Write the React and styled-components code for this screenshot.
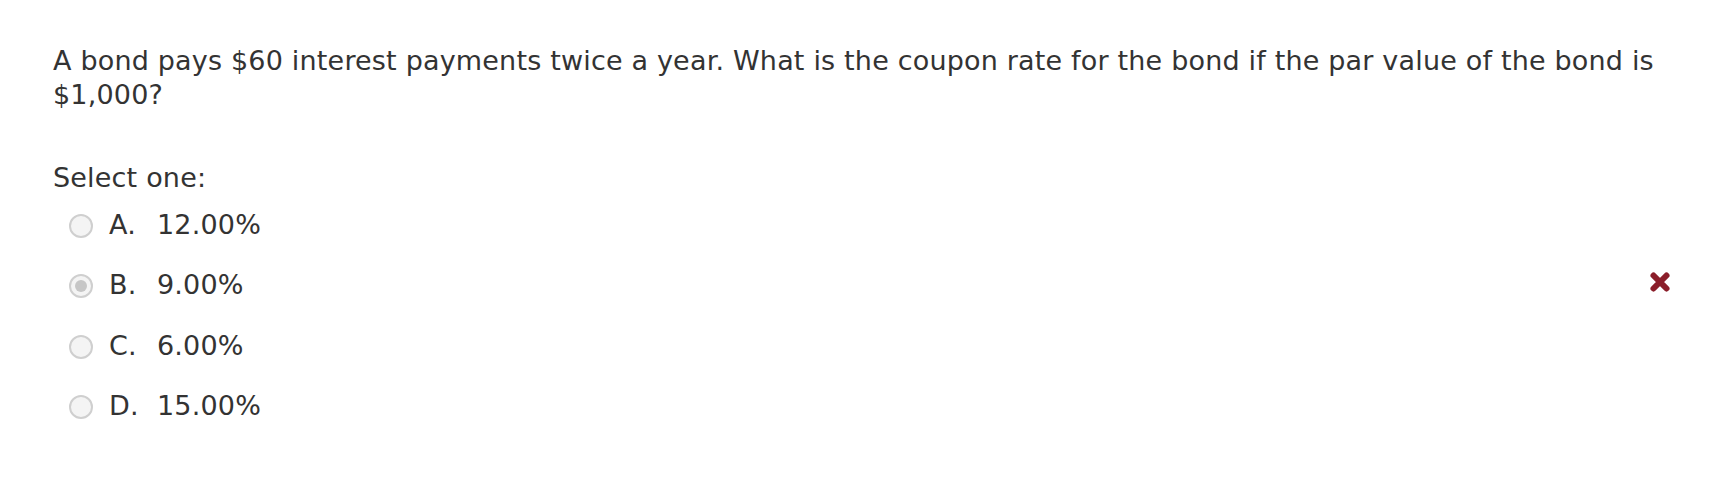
import React from 'react'
import styled, { createGlobalStyle } from 'styled-components'

const GlobalStyle = createGlobalStyle`
    html, body {
        margin: 0;
        padding: 0;
        background: #fff;
    }
    body {
        font-family: "DejaVu Sans", Verdana, sans-serif;
        color: #333;
    }
`

const Page = styled.div`
    padding: 44px 53px 0 53px;
    width: 1736px;
    box-sizing: border-box;
    font-size: 27px;
    line-height: 34px;
    letter-spacing: 0.18px;
`

const Question = styled.p`
    margin: 0;
    max-width: 1625px;
`

const Prompt = styled.div`
    margin-top: 49px;
`

const Options = styled.div`
    display: flex;
    flex-direction: column;
`

const Option = styled.label`
    display: flex;
    align-items: center;
    height: 60.3px;
    padding-left: 16px;
    position: relative;
`

const Radio = styled.span`
    width: 24px;
    height: 24px;
    box-sizing: border-box;
    border-radius: 50%;
    border: 2px solid #cfcfcf;
    background: #f4f4f4;
    display: flex;
    align-items: center;
    justify-content: center;
    margin: 2px 16px 0 0;

    &::after {
        content: '';
        display: ${p => (p.$checked ? 'block' : 'none')};
        width: 12px;
        height: 12px;
        border-radius: 50%;
        background: #c6c6c6;
    }
`

const Letter = styled.span`
    width: 48px;
`

const Wrong = styled.span`
    position: absolute;
    left: 1596px;
    top: 16px;
    display: flex;
`

const options = [
    { letter: 'A.', text: '12.00%' },
    { letter: 'B.', text: '9.00%', checked: true, wrong: true },
    { letter: 'C.', text: '6.00%' },
    { letter: 'D.', text: '15.00%' },
]

const App = () => {
    return (
        <Page>
            <GlobalStyle />
            <Question>
                A bond pays $60 interest payments twice a year. What is the coupon rate for
                the bond if the par value of the bond is $1,000?
            </Question>
            <Prompt>Select one:</Prompt>
            <Options>
                {options.map(o => (
                    <Option key={o.letter}>
                        <Radio $checked={o.checked} />
                        <Letter>{o.letter}</Letter>
                        {o.text}
                        {o.wrong && (
                            <Wrong>
                                <svg width="22" height="22" viewBox="0 0 22 22">
                                    <path
                                        d="M4.5 4.5 L17.5 17.5 M17.5 4.5 L4.5 17.5"
                                        stroke="#8b1e2a"
                                        strokeWidth="6"
                                        strokeLinecap="round"
                                    />
                                </svg>
                            </Wrong>
                        )}
                    </Option>
                ))}
            </Options>
        </Page>
    )
}

export default App
